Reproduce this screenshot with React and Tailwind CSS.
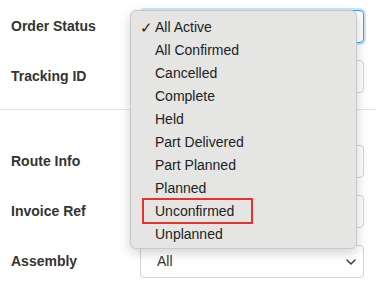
import React from "react";

const Chevron = ({ className = "" }) => (
  <svg width="10" height="6" viewBox="0 0 10 6" className={className} fill="none">
    <path d="M1 1 L5 5 L9 1" stroke="#444" strokeWidth="1.6" strokeLinecap="round" strokeLinejoin="round" />
  </svg>
);

const Row = ({ label, children }) => (
  <div className="flex items-center h-[33px]">
    <div className="w-[140px] pl-[11px] text-[14px] font-bold text-[#333]">{label}</div>
    <div className="w-[224px] h-[33px]">{children}</div>
  </div>
);

const Input = ({ focused, children }) => (
  <div
    className={
      "h-full w-full rounded-[4px] bg-white flex items-center justify-between pl-[16px] pr-[6px] text-[14px] text-[#333] " +
      (focused
        ? "border border-[#3d9be6] shadow-[0_0_0_2px_rgba(61,155,230,0.25)]"
        : "border border-[#d3d3d3]")
    }
  >
    {children}
  </div>
);

const items = [
  "All Active",
  "All Confirmed",
  "Cancelled",
  "Complete",
  "Held",
  "Part Delivered",
  "Part Planned",
  "Planned",
  "Unconfirmed",
  "Unplanned",
];

export default function App() {
  return (
    <div
      className="relative w-[376px] h-[293px] bg-white overflow-hidden"
      style={{ fontFamily: '"Liberation Sans", Arial, sans-serif' }}
    >
      <div className="pt-[10px] flex flex-col gap-[17px]">
        <Row label="Order Status">
          <Input focused>
            <span></span>
            <Chevron />
          </Input>
        </Row>
        <Row label="Tracking ID">
          <Input />
        </Row>
      </div>
      <div className="mt-[16px] border-t border-[#e6e6e6]"></div>
      <div className="pt-[35px] flex flex-col gap-[17px]">
        <Row label="Route Info">
          <Input />
        </Row>
        <Row label="Invoice Ref">
          <Input />
        </Row>
        <Row label="Assembly">
          <Input>
            <span>All</span>
            <Chevron className="mr-[1px]" />
          </Input>
        </Row>
      </div>

      <div className="absolute left-[130px] top-[10px] w-[227px] h-[239px] rounded-[6px] bg-[#e5e5e4] border border-[#c9c9c9] shadow-[0_4px_12px_rgba(0,0,0,0.18)] pt-[5px] pb-[3px] text-[14px] text-[#222]">
        {items.map((it, i) => (
          <div key={it} className="relative flex items-center h-[23px] pl-[24px]">
            {i === 0 && <span className="absolute left-[9px] text-[15px] leading-none text-[#222]">✓</span>}
            {it === "Unconfirmed" && (
              <span className="absolute left-[11px] top-[-2px] w-[111px] h-[26px] border-2 border-[#e8312a]"></span>
            )}
            <span>{it}</span>
          </div>
        ))}
      </div>
    </div>
  );
}
